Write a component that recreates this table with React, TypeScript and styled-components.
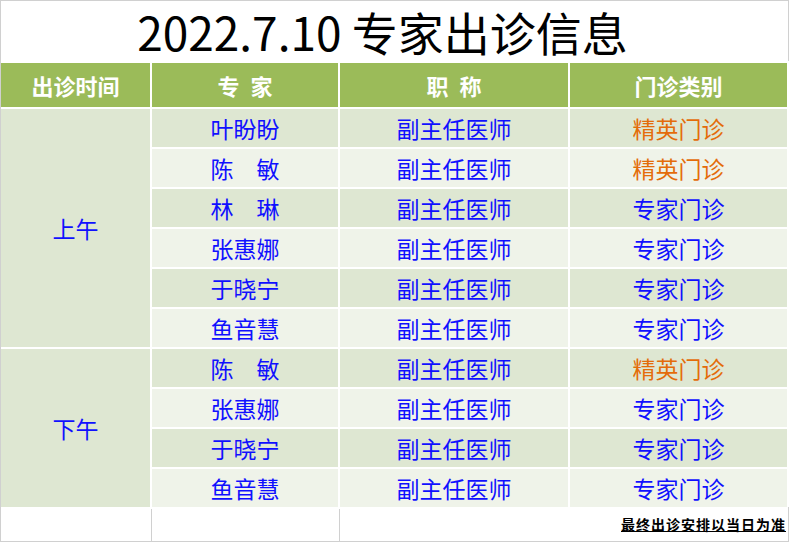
import styled, { createGlobalStyle } from 'styled-components';

const GlobalStyle = createGlobalStyle`
  html, body {
    margin: 0;
    padding: 0;
    background: #fff;
  }
  body {
    font-family: 'Noto Sans CJK SC', 'Noto Sans', sans-serif;
  }
`;

const colors = {
  grid: '#d0d0d0',
  header: '#9bbb59',
  band1: '#dee7d2',
  band2: '#eff3e9',
  blue: '#1010ff',
  orange: '#e46c0a',
};

type Row = { name: string; title: string; kind: string; elite?: boolean };

const morning: Row[] = [
  { name: '叶盼盼', title: '副主任医师', kind: '精英门诊', elite: true },
  { name: '陈　敏', title: '副主任医师', kind: '精英门诊', elite: true },
  { name: '林　琳', title: '副主任医师', kind: '专家门诊' },
  { name: '张惠娜', title: '副主任医师', kind: '专家门诊' },
  { name: '于晓宁', title: '副主任医师', kind: '专家门诊' },
  { name: '鱼音慧', title: '副主任医师', kind: '专家门诊' },
];

const afternoon: Row[] = [
  { name: '陈　敏', title: '副主任医师', kind: '精英门诊', elite: true },
  { name: '张惠娜', title: '副主任医师', kind: '专家门诊' },
  { name: '于晓宁', title: '副主任医师', kind: '专家门诊' },
  { name: '鱼音慧', title: '副主任医师', kind: '专家门诊' },
];

const Sheet = styled.div`
  width: 789px;
  height: 542px;
  box-sizing: border-box;
  border-top: 1px solid ${colors.grid};
  border-left: 1px solid ${colors.grid};
  display: flex;
  flex-direction: column;
  overflow: hidden;
`;

const Title = styled.div`
  height: 60px;
  box-sizing: border-box;
  border-right: 1px solid ${colors.grid};
  display: flex;
  align-items: center;
  justify-content: center;
  padding-right: 24px;
  font-size: 46px;
  line-height: 60px;
  color: #000;
  white-space: nowrap;
`;

const Table = styled.div`
  margin-top: 2px;
  display: grid;
  grid-template-columns: 149px 186px 228px 217px;
  grid-template-rows: 44px repeat(10, 38px);
  gap: 2px;
`;

const HeadCell = styled.div`
  background: ${colors.header};
  color: #fff;
  font-weight: 700;
  font-size: 22px;
  display: flex;
  align-items: center;
  justify-content: center;
  white-space: pre;
`;

const Cell = styled.div<{ $band: number; $orange?: boolean }>`
  background: ${({ $band }) => ($band === 1 ? colors.band1 : colors.band2)};
  color: ${({ $orange }) => ($orange ? colors.orange : colors.blue)};
  font-size: 23px;
  display: flex;
  align-items: center;
  justify-content: center;
  padding-bottom: 1px;
  white-space: pre;
`;

const TimeCell = styled(Cell)<{ $span: number }>`
  grid-column: 1;
  grid-row: span ${({ $span }) => $span};
`;

const Footer = styled.div`
  height: 34px;
  border-bottom: 1px solid ${colors.grid};
  display: flex;
`;

const FooterCell = styled.div<{ $w: number }>`
  width: ${({ $w }) => $w}px;
  box-sizing: border-box;
  margin-top: 2px;
  border-right: 1px solid ${colors.grid};
`;

const Note = styled.div`
  flex: 1;
  border-right: 1px solid ${colors.grid};
  display: flex;
  align-items: center;
  justify-content: flex-end;
  padding-right: 2px;
  font-size: 14px;
  font-weight: 700;
  letter-spacing: 1px;
  text-decoration: underline;
  color: #000;
`;

const renderGroup = (label: string, rows: Row[]) => [
  <TimeCell key={label} $band={1} $span={rows.length}>
    {label}
  </TimeCell>,
  ...rows.flatMap((r, i) => {
    const band = i % 2 === 0 ? 1 : 2;
    return [
      <Cell key={`${label}-n${i}`} $band={band}>
        {r.name}
      </Cell>,
      <Cell key={`${label}-t${i}`} $band={band}>
        {r.title}
      </Cell>,
      <Cell key={`${label}-k${i}`} $band={band} $orange={r.elite}>
        {r.kind}
      </Cell>,
    ];
  }),
];

export default function App() {
  return (
    <>
      <GlobalStyle />
      <Sheet>
        <Title>2022.7.10 专家出诊信息</Title>
        <Table>
          <HeadCell>出诊时间</HeadCell>
          <HeadCell>{'专\u2002家'}</HeadCell>
          <HeadCell>{'职\u2002称'}</HeadCell>
          <HeadCell>门诊类别</HeadCell>
          {renderGroup('上午', morning)}
          {renderGroup('下午', afternoon)}
        </Table>
        <Footer>
          <FooterCell $w={151} />
          <FooterCell $w={188} />
          <Note>最终出诊安排以当日为准</Note>
        </Footer>
      </Sheet>
    </>
  );
}
